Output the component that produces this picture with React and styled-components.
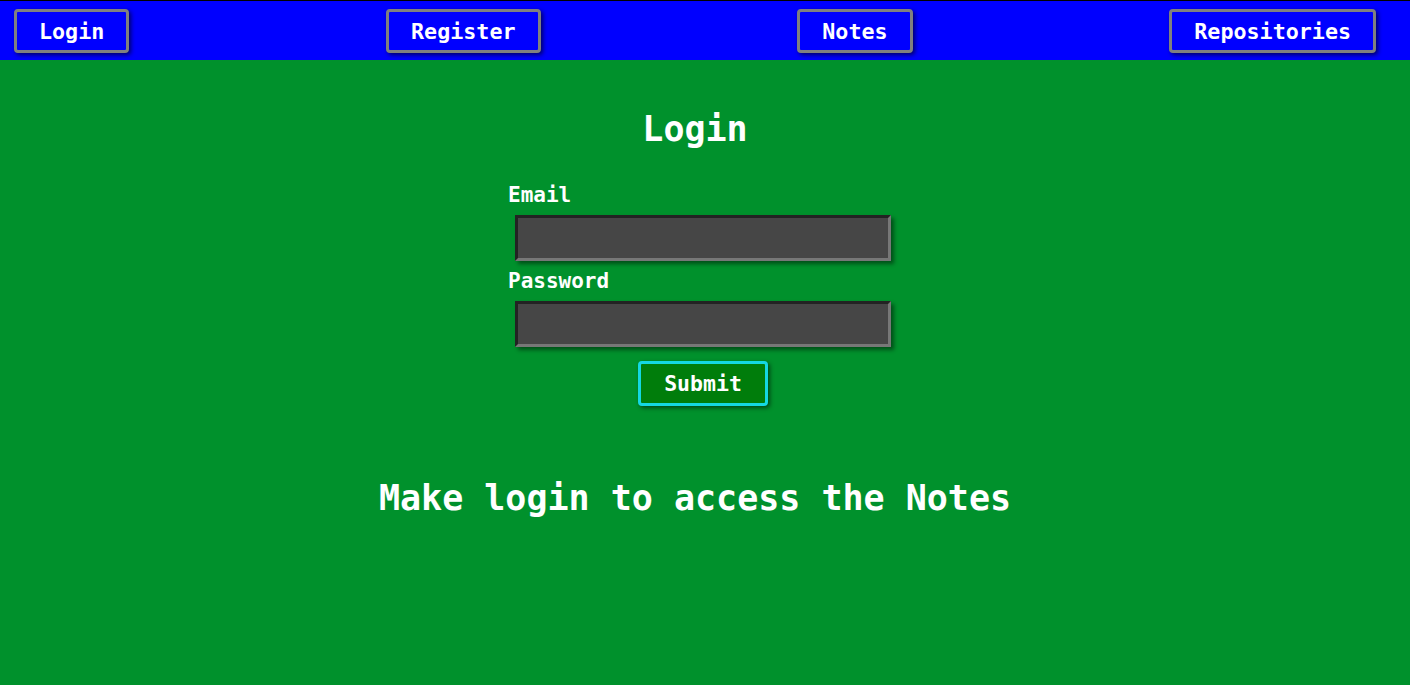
import React from "react";
import styled, { createGlobalStyle } from "styled-components";

const Global = createGlobalStyle`
  html, body { margin: 0; padding: 0; }
  body {
    background: #00912c;
    font-family: "DejaVu Sans Mono", "Liberation Mono", monospace;
    color: #fff;
    min-height: 685px;
  }
`;

const Page = styled.div`
  width: 1390px;
  display: flex;
  flex-direction: column;
`;

const Nav = styled.nav`
  width: 1410px;
  box-sizing: border-box;
  height: 60px;
  background: #0000ff;
  border-top: 1px solid #000;
  display: flex;
  justify-content: space-between;
  align-items: flex-start;
  padding: 8px 34px 0 14px;
`;

const NavButton = styled.button`
  height: 44px;
  padding: 0 22px;
  background: #0000ff;
  color: #fff;
  border: 3px solid #808080;
  border-radius: 4px;
  box-shadow: 2px 2px 4px rgba(0, 0, 40, 0.7);
  font-family: "DejaVu Sans Mono", "Liberation Mono", monospace;
  font-weight: bold;
  font-size: 21.7px;
  cursor: pointer;
`;

const Main = styled.main`
  display: flex;
  flex-direction: column;
  align-items: center;
`;

const Title = styled.h1`
  margin: 47px 0 0;
  font-size: 35px;
  font-weight: bold;
  line-height: 44px;
`;

const Form = styled.form`
  margin-top: 32px;
  width: 390px;
  display: flex;
  flex-direction: column;
  margin-left: 16px;
`;

const Label = styled.label`
  font-size: 21px;
  font-weight: bold;
  line-height: 24px;
  margin-top: ${(p) => p.$top || 0}px;
`;

const Input = styled.input`
  box-sizing: border-box;
  width: 376px;
  height: 46px;
  margin: 8px 0 0 7px;
  background: #464646;
  border-style: solid;
  border-width: 3px;
  border-color: #232323 #777777 #777777 #232323;
  box-shadow: 3px 3px 4px rgba(0, 0, 0, 0.45);
  color: #fff;
  font-family: inherit;
  font-size: 18px;
  outline: none;
`;

const Submit = styled.button`
  align-self: center;
  margin: 14px 0 0 0;
  width: 130px;
  height: 45px;
  background: #007d0b;
  color: #fff;
  border: 3px solid #14d8e2;
  border-radius: 4px;
  box-shadow: 2px 2px 4px rgba(0, 0, 0, 0.5);
  font-family: "DejaVu Sans Mono", "Liberation Mono", monospace;
  font-weight: bold;
  font-size: 21.5px;
  cursor: pointer;
`;

const Message = styled.h2`
  margin: 70px 0 0;
  font-size: 35px;
  font-weight: bold;
  line-height: 44px;
`;

export default function App() {
  return (
    <>
      <Global />
      <Page>
        <Nav>
          <NavButton>Login</NavButton>
          <NavButton>Register</NavButton>
          <NavButton>Notes</NavButton>
          <NavButton>Repositories</NavButton>
        </Nav>
        <Main>
          <Title>Login</Title>
          <Form onSubmit={(e) => e.preventDefault()}>
            <Label htmlFor="email">Email</Label>
            <Input id="email" type="email" />
            <Label htmlFor="password" $top={8}>Password</Label>
            <Input id="password" type="password" />
            <Submit type="submit">Submit</Submit>
          </Form>
          <Message>Make login to access the Notes</Message>
        </Main>
      </Page>
    </>
  );
}
